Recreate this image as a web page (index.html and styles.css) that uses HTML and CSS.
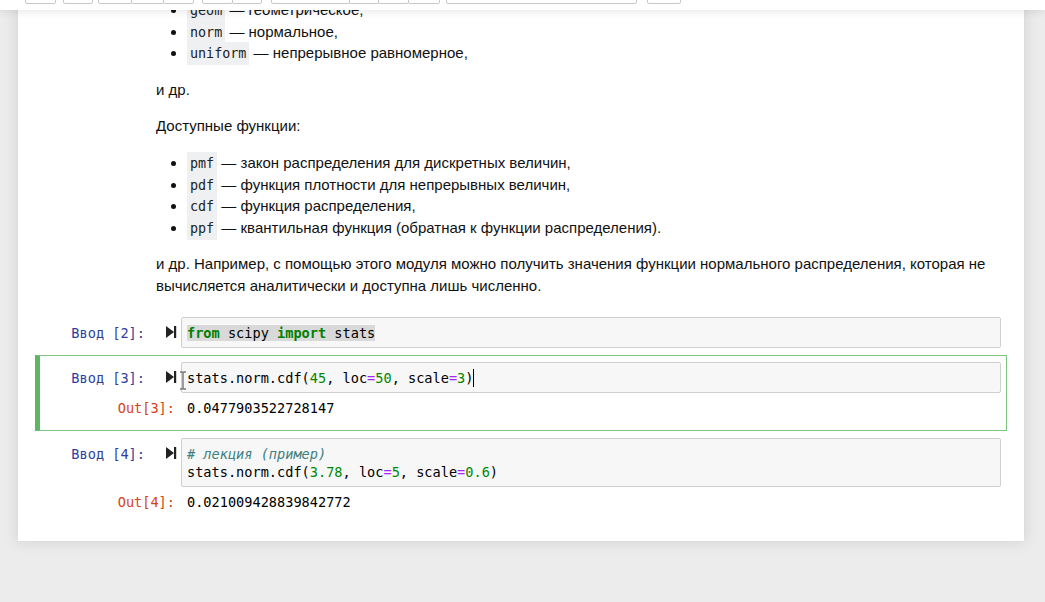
FILE: index.html
```html
<!DOCTYPE html>
<html lang="ru">
<head>
<meta charset="utf-8">
<title>Notebook</title>
<link rel="stylesheet" href="styles.css">
</head>
<body>
<div class="toolbar">
  <div class="group g1"><span class="btn b30"></span></div>
  <div class="group g2"><span class="btn b29"></span></div>
  <div class="group g3"><span class="btn b33"></span><span class="btn b32"></span><span class="btn b30"></span></div>
  <div class="group g4"><span class="btn b30"></span><span class="btn b29"></span></div>
  <div class="group g5"><span class="btn b78"></span><span class="btn b29"></span><span class="btn b30"></span><span class="btn b31"></span></div>
  <div class="group g6"><span class="btn b191"></span></div>
  <div class="group g7"><span class="btn b33"></span></div>
</div>

<main class="notebook">
  <div class="text-cell">
    <ul>
      <li><code>geom</code> — геометрическое,</li>
      <li><code>norm</code> — нормальное,</li>
      <li><code>uniform</code> — непрерывное равномерное,</li>
    </ul>
    <p>и др.</p>
    <p>Доступные функции:</p>
    <ul>
      <li><code>pmf</code> — закон распределения для дискретных величин,</li>
      <li><code>pdf</code> — функция плотности для непрерывных величин,</li>
      <li><code>cdf</code> — функция распределения,</li>
      <li><code>ppf</code> — квантильная функция (обратная к функции распределения).</li>
    </ul>
    <p>и др. Например, с помощью этого модуля можно получить значения функции нормального распределения, которая не вычисляется аналитически и доступна лишь численно.</p>
  </div>

  <div class="cell">
    <div class="row">
      <div class="prompt in">Ввод [2]:</div>
      <div class="run"><svg width="11" height="12" viewBox="0 0 11 12"><polygon points="0,0 8,6 0,12" fill="#222"/><rect x="8" y="0" width="2.2" height="12" fill="#222"/></svg></div>
      <div class="input-area"><pre><span class="sel"><span class="kw">from</span> scipy <span class="kw">import</span> stats</span></pre></div>
    </div>
  </div>

  <div class="cell selected">
    <div class="row">
      <div class="prompt in">Ввод [3]:</div>
      <div class="run"><svg width="11" height="12" viewBox="0 0 11 12"><polygon points="0,0 8,6 0,12" fill="#222"/><rect x="8" y="0" width="2.2" height="12" fill="#222"/></svg></div>
      <div class="input-area">
        <pre>stats.norm.cdf(<span class="num">45</span>, loc<span class="op">=</span><span class="num">50</span>, scale<span class="op">=</span><span class="num">3</span>)<span class="caret"></span></pre>
        <svg class="ibeam" width="8" height="19" viewBox="0 0 8 19"><path d="M1 1 H3 Q4 1 4 2.5 V16.5 Q4 18 3 18 H1 M7 1 H5 Q4 1 4 2.5 M4 16.5 Q4 18 5 18 H7" fill="none" stroke="#777" stroke-width="1.4"/></svg>
      </div>
    </div>
    <div class="row out-row">
      <div class="prompt out">Out[3]:</div>
      <div class="output"><pre>0.0477903522728147</pre></div>
    </div>
  </div>

  <div class="cell">
    <div class="row">
      <div class="prompt in">Ввод [4]:</div>
      <div class="run"><svg width="11" height="12" viewBox="0 0 11 12"><polygon points="0,0 8,6 0,12" fill="#222"/><rect x="8" y="0" width="2.2" height="12" fill="#222"/></svg></div>
      <div class="input-area"><pre><span class="cm"># лекция (пример)</span>
stats.norm.cdf(<span class="num">3.78</span>, loc<span class="op">=</span><span class="num">5</span>, scale<span class="op">=</span><span class="num">0.6</span>)</pre></div>
    </div>
    <div class="row out-row">
      <div class="prompt out">Out[4]:</div>
      <div class="output"><pre>0.021009428839842772</pre></div>
    </div>
  </div>
</main>
</body>
</html>
```
FILE: styles.css
```css
html, body {
  margin: 0;
  padding: 0;
}
body {
  background: #ececec;
  font-family: "Liberation Sans", Arial, sans-serif;
  color: #000;
  height: 602px;
  overflow: hidden;
}

/* toolbar (overlays the scrolled notebook) */
.toolbar {
  position: fixed;
  top: 0;
  left: 0;
  right: 0;
  height: 10px;
  background: #fff;
  box-shadow: 0 2px 8px rgba(0, 0, 0, 0.09);
  z-index: 10;
  display: flex;
  align-items: flex-start;
  padding-left: 25px;
}
.group {
  display: flex;
  margin-top: -20px;
}
.g2 { margin-left: 7px; }
.g3 { margin-left: 5px; }
.g4 { margin-left: 8px; }
.g5 { margin-left: 9px; }
.g6 { margin-left: 6px; }
.g7 { margin-left: 10px; }
.btn {
  display: block;
  box-sizing: border-box;
  height: 24px;
  border: 1px solid #c8c8c8;
  border-radius: 2px;
  background: #fff;
}
.group .btn + .btn {
  margin-left: -1px;
}
.b29 { width: 30px; }
.b30 { width: 31px; }
.b31 { width: 32px; }
.b32 { width: 33px; }
.b33 { width: 34px; }
.b78 { width: 79px; }
.b191 { width: 191px; }

/* notebook panel */
.notebook {
  display: block;
  margin: -1px 21px 0 18px;
  padding: 0 17px 16px;
  background: #fff;
  box-shadow: 0 0 12px 1px rgba(87, 87, 87, 0.18);
}

.text-cell {
  margin-left: 121px;
  margin-right: 6px;
  font-size: 15px;
  line-height: 21.6px;
  color: #111;
}
.text-cell p {
  margin: 15px 0;
}
.text-cell p:last-child {
  margin-bottom: 13px;
}
.text-cell ul {
  margin: 15px 0;
  padding-left: 31px;
}
.text-cell ul:first-child {
  margin-top: 0;
}
.text-cell code {
  font-family: "DejaVu Sans Mono", "Liberation Mono", monospace;
  font-size: 13.4px;
  line-height: 1;
  background: #eff0f1;
  padding: 4px 3px;
  color: #222;
}

/* code cells */
.cell {
  border: 1px solid transparent;
  border-left-width: 5px;
  padding: 6px 5px;
}
.cell.selected {
  border-color: #7cc47f;
  border-left-color: #5cb860;
}
.row {
  display: flex;
}
pre, .prompt {
  font-family: "DejaVu Sans Mono", "Liberation Mono", monospace;
  font-size: 13.6px;
  line-height: 18px;
  margin: 0;
}
.prompt {
  box-sizing: border-box;
  text-align: right;
  white-space: nowrap;
}
.prompt.in {
  flex: 0 0 115px;
  padding-right: 15px;
  padding-top: 7px;
  color: #303f9f;
}
.run {
  flex: 0 0 21px;
  padding: 9px 0 0 6px;
  box-sizing: border-box;
}
.run svg {
  display: block;
}
.input-area {
  position: relative;
  flex: 1;
  background: #f7f7f7;
  border: 1px solid #cfcfcf;
  border-radius: 2px;
  padding: 6px 5px 5px;
}
.input-area pre {
  color: #000;
}
.sel {
  background: #d9d9d9;
}
.kw {
  color: #008000;
  font-weight: bold;
}
.num {
  color: #080;
}
.op {
  color: #aa22ff;
}
.cm {
  color: #408080;
  font-style: italic;
}
.caret {
  display: inline-block;
  width: 0;
  height: 18px;
  border-left: 1px solid #000;
  vertical-align: top;
}
.ibeam {
  position: absolute;
  left: -3px;
  top: 8px;
}
.out-row {
  padding: 6px 0 7px;
}
.prompt.out {
  flex: 0 0 136px;
  padding-right: 6px;
  color: #d84315;
}
.output {
  flex: 1;
  padding-left: 6px;
}
```
